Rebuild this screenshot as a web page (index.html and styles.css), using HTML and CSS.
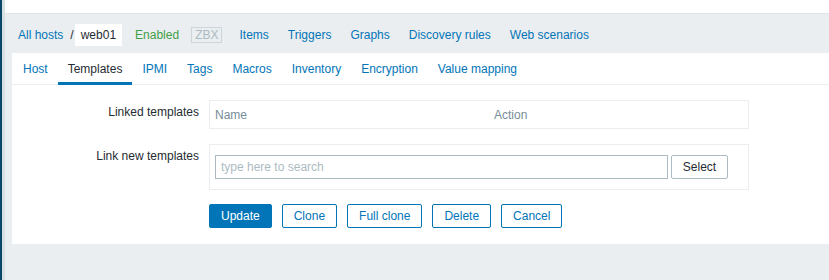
FILE: index.html
```html
<!DOCTYPE html>
<html lang="en">
<head>
  <meta charset="UTF-8" />
  <title>Hosts - web01 - Templates</title>
  <link rel="stylesheet" href="styles.css">
</head>
<body>
  <div class="layout">
    <div class="sidebar-edge"></div>

    <main class="wrapper">
      <div class="top-bar"></div>

      <!-- Host navigation -->
      <nav class="host-nav">
        <a class="link" href="#">All hosts</a>
        <span class="sep">/</span>
        <span class="host-name">web01</span>
        <span class="status">Enabled</span>
        <span class="zbx">ZBX</span>
        <a class="link nav-item first" href="#">Items</a>
        <a class="link nav-item" href="#">Triggers</a>
        <a class="link nav-item" href="#">Graphs</a>
        <a class="link nav-item" href="#">Discovery rules</a>
        <a class="link nav-item" href="#">Web scenarios</a>
      </nav>

      <div class="panel">
        <ul class="tabs">
          <li><a href="#">Host</a></li>
          <li class="active"><a href="#">Templates</a></li>
          <li><a href="#">IPMI</a></li>
          <li><a href="#">Tags</a></li>
          <li><a href="#">Macros</a></li>
          <li><a href="#">Inventory</a></li>
          <li><a href="#">Encryption</a></li>
          <li><a href="#">Value mapping</a></li>
        </ul>

        <form class="form-list">
          <div class="form-row">
            <label class="form-label">Linked templates</label>
            <div class="form-field">
              <table class="table-box">
                <thead>
                  <tr>
                    <th class="col-name">Name</th>
                    <th>Action</th>
                  </tr>
                </thead>
              </table>
            </div>
          </div>

          <div class="form-row">
            <label class="form-label">Link new templates</label>
            <div class="form-field">
              <div class="multiselect-box">
                <input class="search-input" type="text" placeholder="type here to search">
                <button type="button" class="btn-grey">Select</button>
              </div>
            </div>
          </div>

          <div class="form-actions">
            <button type="button" class="btn btn-primary">Update</button>
            <button type="button" class="btn">Clone</button>
            <button type="button" class="btn">Full clone</button>
            <button type="button" class="btn">Delete</button>
            <button type="button" class="btn">Cancel</button>
          </div>
        </form>
      </div>
    </main>
  </div>
</body>
</html>
```

FILE: styles.css
```css
* {
  box-sizing: border-box;
}
body {
  margin: 0;
  background: #ebeef0;
  font-family: 'Liberation Sans', Arial, sans-serif;
  font-size: 12px;
  color: #1f2c33;
}
a {
  text-decoration: none;
}
.layout {
  display: flex;
  min-height: 280px;
}

/* borde del menu lateral */
.sidebar-edge {
  width: 5px;
  flex: none;
  border-left: 2px solid #0a466a;
  background: #d9e0e4;
}
.wrapper {
  flex: 1;
  padding-left: 7px;
}
.top-bar {
  height: 14px;
  margin-left: -7px;
  background: #fff;
  border-bottom: 1px solid #dfe4e7;
}

/* Navegacion del host */
.host-nav {
  display: flex;
  align-items: center;
  height: 39px;
  padding: 10px 0 7px 6px;
  line-height: 22px;
}
.link {
  color: #0275b8;
}
.sep {
  margin-left: 7px;
}
.host-name {
  margin-left: 1px;
  padding: 0 6px;
  background: #fff;
}
.status {
  margin-left: 13px;
  color: #429e47;
}
.zbx {
  margin-left: 12px;
  padding: 0 3px;
  line-height: 14px;
  border: 1px solid #ccd5d9;
  color: #acbbc2;
}
.nav-item {
  margin-left: 19px;
}
.nav-item.first {
  margin-left: 17px;
}

/* Panel blanco */
.panel {
  background: #fff;
  padding-bottom: 16px;
}
.tabs {
  display: flex;
  margin: 0;
  padding: 0 0 0 1px;
  list-style: none;
  height: 32px;
  border-bottom: 1px solid #ebeef0;
}
.tabs li {
  padding: 3px 10px 0;
  line-height: 26px;
  height: 32px;
  border-bottom: 3px solid transparent;
}
.tabs li a {
  color: #0275b8;
}
.tabs li.active {
  border-bottom-color: #0275b8;
}
.tabs li.active a {
  color: #1f2c33;
}

.form-list {
  padding-top: 15px;
}
.form-row {
  display: flex;
  align-items: flex-start;
  margin-bottom: 15px;
}
.form-label {
  width: 187px;
  padding-top: 5px;
  line-height: 14px;
  text-align: right;
}
.form-field {
  margin-left: 10px;
}

.table-box {
  width: 540px;
  border: 1px solid #ebeef0;
  border-spacing: 0;
}
.table-box th {
  height: 27px;
  padding: 0 5px;
  text-align: left;
  font-weight: normal;
  color: #768d99;
}
.table-box .col-name {
  width: 279px;
}

.multiselect-box {
  display: flex;
  width: 540px;
  padding: 10px 5px;
  border: 1px solid #ebeef0;
}
.search-input {
  width: 453px;
  height: 24px;
  margin: 0;
  padding: 0 5px;
  border: 1px solid #acbbc2;
  font-family: inherit;
  font-size: 12px;
  color: #1f2c33;
}
.search-input::placeholder {
  color: #acbbc2;
}
.btn-grey {
  width: 57px;
  height: 24px;
  margin-left: 3px;
  padding: 0;
  background: #fff;
  border: 1px solid #acbbc2;
  border-radius: 2px;
  font-family: inherit;
  font-size: 12px;
  color: #1f2c33;
}

.form-actions {
  display: flex;
  gap: 10px;
  margin-top: -1px;
  padding-left: 197px;
}
.btn {
  height: 24px;
  padding: 0 11px;
  background: #fff;
  border: 1px solid #0275b8;
  border-radius: 2px;
  font-family: inherit;
  font-size: 12px;
  color: #0275b8;
}
.btn-primary {
  background: #0275b8;
  color: #fff;
}
```
